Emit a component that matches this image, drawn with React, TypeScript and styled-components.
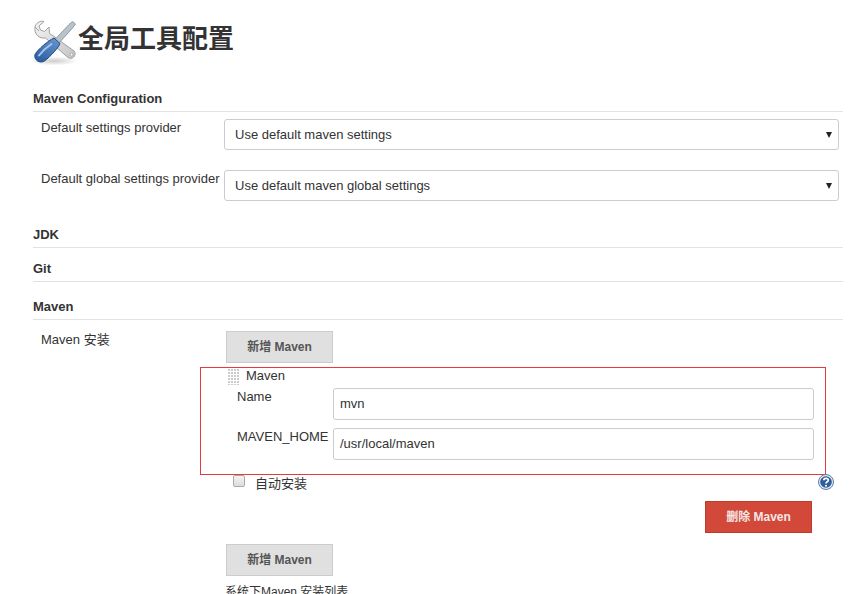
import React from "react";
import styled, { createGlobalStyle } from "styled-components";

const Global = createGlobalStyle`
  html, body { margin: 0; padding: 0; height: 594px; overflow: hidden; background: #fff; }
  body { font-family: "Liberation Sans", Arial, "Noto Sans CJK SC", sans-serif; font-size: 13px; color: #333; }
`;
const Page = styled.div`
  position: relative;
  width: 855px;
  height: 594px;
  overflow: hidden;
  box-sizing: border-box;
  padding: 18px 12px 0 33px;
`;
const TitleRow = styled.div`
  display: flex;
  align-items: center;
  height: 48px;
  margin-left: -3px;
  margin-bottom: 25px;
`;
const Title = styled.h1`
  margin: 0;
  font-family: "Liberation Sans", "Noto Sans CJK SC", sans-serif;
  font-size: 26px;
  line-height: 40px;
  font-weight: 700;
  color: #333;
  position: relative;
  top: -3px;
`;
const SectionHead = styled.div<{ $gap?: number }>`
  font-weight: 700;
  font-size: 13px;
  line-height: 15px;
  height: 15px;
  padding-bottom: 5px;
  border-bottom: 1px solid #e2e2e2;
  margin-top: ${(p) => p.$gap ?? 0}px;
`;
const SettingRow = styled.div<{ $top: number }>`
  display: grid;
  grid-template-columns: 191px 615px;
  margin-top: ${(p) => p.$top}px;
  height: 31px;
`;
const Label = styled.div`
  padding-left: 8px;
  line-height: 15px;
  padding-top: 1px;
`;
const SelectBox = styled.div`
  box-sizing: border-box;
  height: 31px;
  border: 1px solid #ccc;
  border-radius: 3px;
  display: flex;
  align-items: center;
  justify-content: space-between;
  padding: 0 6px 0 10px;
  background: #fff;
`;
const Caret = styled.span`
  width: 0;
  height: 0;
  border-left: 3px solid transparent;
  border-right: 3px solid transparent;
  border-top: 6px solid #222;
`;
const InstallRow = styled.div`
  display: grid;
  grid-template-columns: 193px 1fr;
  margin-top: 11px;
`;
const InstallLabel = styled.div`
  padding-left: 8px;
  line-height: 18px;
`;
const InstallBody = styled.div`
  display: flex;
  flex-direction: column;
  align-items: flex-start;
`;
const Button = styled.div<{ $danger?: boolean }>`
  box-sizing: border-box;
  width: 107px;
  height: 32px;
  padding-bottom: 4px;
  display: flex;
  align-items: center;
  justify-content: center;
  font-weight: 700;
  font-size: 12px;
  border: 1px solid ${(p) => (p.$danger ? "#c0392b" : "#ccc")};
  background: ${(p) => (p.$danger ? "#d24939" : "#e0e0e0")};
  color: ${(p) => (p.$danger ? "#f5e6e6" : "#555")};
`;
const Block = styled.div`
  width: 100%;
  margin-top: 5px;
  display: flex;
  flex-direction: column;
`;
const BlockHead = styled.div`
  display: flex;
  align-items: center;
  gap: 7px;
  height: 17px;
  padding-left: 1px;
  line-height: 15px;
`;
const BlockName = styled.span`
  margin-top: -2px;
`;
const Handle = styled.div`
  width: 12px;
  height: 17px;
  background-image: linear-gradient(90deg, #fff 1px, transparent 1px), linear-gradient(#fff 1px, #ccc 1px);
  background-size: 3px 3px;
`;
const Field = styled.div<{ $top: number }>`
  display: grid;
  grid-template-columns: 96px 481px;
  margin-top: ${(p) => p.$top}px;
  padding-left: 11px;
  height: 32px;
`;
const FieldLabel = styled.div`
  line-height: 16px;
  padding-top: 1px;
`;
const TextInput = styled.div`
  box-sizing: border-box;
  height: 32px;
  padding: 0 0 2px 6px;
  border: 1px solid #ccc;
  border-radius: 3px;
  display: flex;
  align-items: center;
  color: #333;
`;
const CheckRow = styled.div`
  display: flex;
  align-items: center;
  height: 16px;
  margin-top: 14px;
  padding-left: 7px;
  gap: 10px;
`;
const CheckBox = styled.span`
  box-sizing: border-box;
  width: 12px;
  height: 12px;
  border: 1px solid #aaa;
  border-radius: 2px;
  background: linear-gradient(#f4f4f4, #dcdcdc);
  margin-top: -2px;
`;
const DangerRow = styled.div`
  width: 586px;
  display: flex;
  justify-content: flex-end;
  margin-top: 11px;
`;
const NextButton = styled(Button)`
  margin-top: 11px;
`;
const Footer = styled.div`
  margin-top: 9px;
  margin-left: -1px;
  font-size: 12px;
  line-height: 15px;
`;
const RedFrame = styled.div`
  position: absolute;
  left: 200px;
  top: 367px;
  width: 624px;
  height: 106px;
  border: 1px solid #e8393c;
  pointer-events: none;
`;
const HelpIcon = styled.svg`
  position: absolute;
  left: 818px;
  top: 474px;
`;

const ToolsIcon = () => (
  <svg width="48" height="48" viewBox="0 0 48 48" style={{ flex: "none" }}>
    <defs>
      <linearGradient id="blue" x1="0.8" y1="0" x2="0.2" y2="1">
        <stop offset="0" stopColor="#6595cf" />
        <stop offset="1" stopColor="#2c5da1" />
      </linearGradient>
      <linearGradient id="steel" x1="0" y1="0" x2="1" y2="1">
        <stop offset="0" stopColor="#f4f4f4" />
        <stop offset="1" stopColor="#c4c4c4" />
      </linearGradient>
      <radialGradient id="shade">
        <stop offset="0" stopColor="#000" stopOpacity="0.2" />
        <stop offset="1" stopColor="#000" stopOpacity="0" />
      </radialGradient>
    </defs>
    <ellipse cx="24" cy="43" rx="24" ry="4.5" fill="url(#shade)" />
    <path d="M14 3.5 L9 8 L10.5 12 L14.5 13.5 L19 9 C20 13 18 16 22 17 L44 33 C47.5 37 42 42.5 38 39.5 L15.5 20 C9 21 4 16 5 9 L9 13 L5 9 C5 6 10 2 14 3.5 Z" fill="url(#steel)" stroke="#a0a0a0" strokeWidth="1" strokeLinejoin="round" />
    <circle cx="41.5" cy="36.5" r="1.5" fill="#f5f5f5" stroke="#909090" strokeWidth="0.6" />
    <path d="M39 6.5 L42.5 3.5 L45.5 6 L42.5 10 L29 25 L25 21.5 Z" fill="#b9c3cb" stroke="#7e8992" strokeWidth="0.8" strokeLinejoin="round" />
    <path d="M24 20 L30 25.5 C29 29 21 38 14.5 43 C10 46 3.5 42 5 36.5 C8 31 18 23 24 20 Z" fill="url(#blue)" stroke="#25497f" strokeWidth="1" />
    <path d="M9 37.5 C12 33.5 17 29 21.5 26" fill="none" stroke="#a6c4ea" strokeWidth="2" strokeLinecap="round" />
  </svg>
);

export default function App() {
  return (
    <>
      <Global />
      <Page>
        <TitleRow>
          <ToolsIcon />
          <Title>全局工具配置</Title>
        </TitleRow>
        <SectionHead>Maven Configuration</SectionHead>
        <SettingRow $top={7}>
          <Label>Default settings provider</Label>
          <SelectBox>
            Use default maven settings
            <Caret />
          </SelectBox>
        </SettingRow>
        <SettingRow $top={20}>
          <Label>Default global settings provider</Label>
          <SelectBox>
            Use default maven global settings
            <Caret />
          </SelectBox>
        </SettingRow>
        <SectionHead $gap={26}>JDK</SectionHead>
        <SectionHead $gap={13}>Git</SectionHead>
        <SectionHead $gap={17}>Maven</SectionHead>
        <InstallRow>
          <InstallLabel>Maven 安装</InstallLabel>
          <InstallBody>
            <Button>新增 Maven</Button>
            <Block>
              <BlockHead>
                <Handle />
                <BlockName>Maven</BlockName>
              </BlockHead>
              <Field $top={3}>
                <FieldLabel>Name</FieldLabel>
                <TextInput>mvn</TextInput>
              </Field>
              <Field $top={8}>
                <FieldLabel>MAVEN_HOME</FieldLabel>
                <TextInput>/usr/local/maven</TextInput>
              </Field>
            </Block>
            <CheckRow>
              <CheckBox />
              自动安装
            </CheckRow>
            <DangerRow>
              <Button $danger>删除 Maven</Button>
            </DangerRow>
            <NextButton>新增 Maven</NextButton>
            <Footer>系统下Maven 安装列表</Footer>
          </InstallBody>
        </InstallRow>
        <RedFrame />
        <HelpIcon width="16" height="16" viewBox="0 0 16 16">
          <circle cx="8" cy="8" r="7.5" fill="#dfe7f2" stroke="#5f7ea8" />
          <circle cx="8" cy="8" r="5.8" fill="#2f5c9c" />
          <path d="M5.8 6.2 C5.8 3.8 10.3 3.8 10.3 6.2 C10.3 7.8 8 7.8 8 9.6" fill="none" stroke="#fff" strokeWidth="1.7" />
          <circle cx="8" cy="11.8" r="1.05" fill="#fff" />
        </HelpIcon>
      </Page>
    </>
  );
}
